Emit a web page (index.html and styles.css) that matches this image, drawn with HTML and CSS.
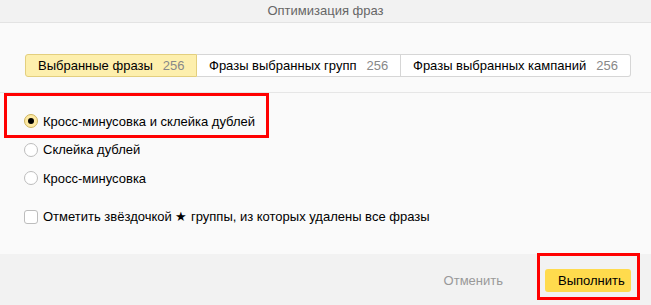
FILE: index.html
```html
<!DOCTYPE html>
<html lang="ru">
<head>
<meta charset="utf-8">
<title>Оптимизация фраз</title>
<link rel="stylesheet" href="styles.css">
</head>
<body>
<div class="dialog">
  <div class="header">Оптимизация фраз</div>
  <div class="main">
    <div class="tabs">
      <div class="tab tab-active"><span>Выбранные фразы</span><span class="count">256</span></div>
      <div class="tab tab-2"><span>Фразы выбранных групп</span><span class="count">256</span></div>
      <div class="tab tab-3"><span>Фразы выбранных кампаний</span><span class="count">256</span></div>
    </div>
  </div>
  <div class="options">
    <label class="row"><span class="radio radio-checked"></span><span>Кросс-минусовка и склейка дублей</span></label>
    <label class="row"><span class="radio"></span><span>Склейка дублей</span></label>
    <label class="row"><span class="radio"></span><span>Кросс-минусовка</span></label>
    <label class="row row-check"><span class="checkbox"></span><span>Отметить звёздочкой ★ группы, из которых удалены все фразы</span></label>
  </div>
  <div class="footer">
    <button class="btn btn-cancel">Отменить</button>
    <button class="btn btn-run">Выполнить</button>
  </div>
  <div class="mark mark-1"></div>
  <div class="mark mark-2"></div>
</div>
</body>
</html>
```
FILE: styles.css
```css
* { box-sizing: border-box; }
html, body { margin: 0; padding: 0; }
body {
  width: 651px;
  height: 305px;
  overflow: hidden;
  background: #fafafa;
  font-family: "Liberation Sans", Arial, sans-serif;
  font-size: 13px;
  color: #000;
}
.dialog {
  position: relative;
  width: 651px;
  height: 305px;
  display: flex;
  flex-direction: column;
}
.header {
  height: 23px;
  line-height: 22px;
  background: #f2f2f2;
  border-bottom: 1px solid #e3e3e3;
  text-align: center;
  color: #666;
}
.main {
  padding: 31px 20px 15px 25px;
  border-bottom: 1px solid #e6e6e6;
}
.tabs {
  display: flex;
  height: 23px;
}
.tab {
  display: flex;
  align-items: center;
  gap: 10px;
  padding: 0 12px;
  background: #fff;
  border: 1px solid #d6d6d6;
  border-left: none;
  white-space: nowrap;
}
.tab-active {
  width: 172px;
  background: #fdefad;
  border: 1px solid #e3cf7e;
  border-radius: 3px 0 0 3px;
}
.tab-2 { width: 204px; }
.tab-3 { width: 230px; border-radius: 0 3px 3px 0; }
.count { color: #888; }
.options {
  padding: 14px 0 0 24px;
  display: flex;
  flex-direction: column;
  height: 161px;
}
.row {
  display: flex;
  align-items: center;
  gap: 5px;
  height: 28.5px;
}
.row-check { margin-top: 10px; }
.radio {
  width: 14px;
  height: 14px;
  border-radius: 50%;
  border: 1px solid #bdbdbd;
  background: #fff;
  display: flex;
  align-items: center;
  justify-content: center;
  flex: none;
}
.radio-checked {
  background: #fde9a3;
  border-color: #cdb35e;
}
.radio-checked::after {
  content: "";
  width: 6px;
  height: 6px;
  border-radius: 50%;
  background: #000;
}
.checkbox {
  width: 14px;
  height: 14px;
  border-radius: 3px;
  border: 1px solid #bdbdbd;
  background: #fff;
  flex: none;
}
.footer {
  flex: 1;
  background: #f2f2f2;
  display: flex;
  justify-content: flex-end;
  align-items: center;
  gap: 29px;
  padding: 2px 20px 0 0;
}
.btn {
  font: inherit;
  height: 23px;
  border: none;
  border-radius: 3px;
  padding: 0 13px;
  background: transparent;
}
.btn-cancel { color: #999; }
.btn-run {
  width: 86px;
  background: #ffdb4d;
  color: #000;
}
.mark {
  position: absolute;
  border: 3px solid #ff0000;
}
.mark-1 { left: 4px; top: 93px; width: 265px; height: 45px; }
.mark-2 { left: 537px; top: 253px; width: 103px; height: 47px; }
```
